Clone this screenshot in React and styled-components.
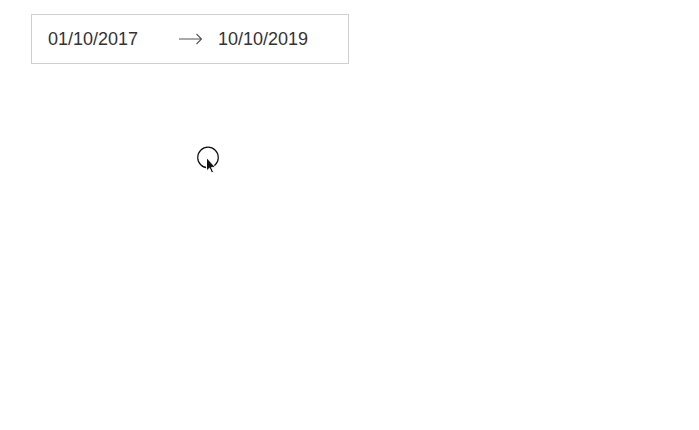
import styled, { createGlobalStyle } from 'styled-components';

const GlobalStyle = createGlobalStyle`
    body {
        margin: 0;
        background: #fff;
        font-family: "Liberation Sans", Arial, sans-serif;
    }
`;

const Page = styled.div`
    position: relative;
    width: 699px;
    height: 430px;
    padding: 14px 0 0 31px;
    box-sizing: border-box;
`;

const RangeBox = styled.div`
    display: flex;
    align-items: center;
    width: 318px;
    height: 50px;
    box-sizing: border-box;
    border: 1px solid #cfcfcf;
    padding-left: 16px;
`;

const DateText = styled.span`
    font-size: 18px;
    color: #333;
    width: ${({ $width }) => $width}px;
`;

const Separator = styled.svg`
    width: 24px;
    height: 12px;
    margin-right: 15px;
    color: #555;
`;

const Cursor = styled.svg`
    position: absolute;
    left: 196px;
    top: 145px;
    width: 26px;
    height: 32px;
`;

function App() {
    return <>
        <GlobalStyle />
        <Page>
            <RangeBox>
                <DateText $width={131}>01/10/2017</DateText>
                <Separator viewBox="0 0 24 12">
                    <path d="M0 6 H22.5 M17.5 1 L22.5 6 L17.5 11" fill="none" stroke="currentColor" strokeWidth="1.1" />
                </Separator>
                <DateText>10/10/2019</DateText>
            </RangeBox>
            <Cursor viewBox="0 0 26 32">
                <circle cx="12" cy="12.5" r="10.3" fill="none" stroke="#111" strokeWidth="1.2" />
                <path d="M10.5 12.5 V26 L13.5 23.2 L15.6 28 L17.6 27.1 L15.5 22.4 L19.5 22.4 Z" fill="#111" stroke="#fff" strokeWidth="1" strokeLinejoin="round" />
            </Cursor>
        </Page>
    </>
}

export default App;
